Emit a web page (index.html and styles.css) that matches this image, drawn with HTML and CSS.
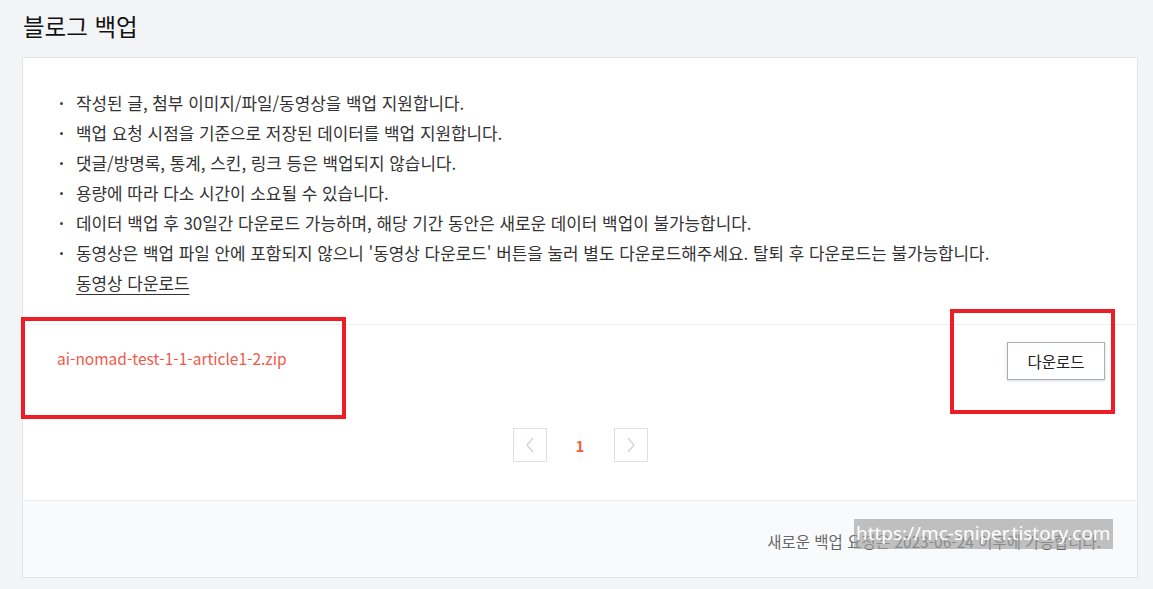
FILE: index.html
```html
<!DOCTYPE html>
<html lang="ko">
<head>
<meta charset="utf-8">
<link rel="stylesheet" href="styles.css">
</head>
<body>
<div class="page">
  <h1 class="title">블로그 백업</h1>
  <div class="card">
    <ul class="notice">
      <li>작성된 글, 첨부 이미지/파일/동영상을 백업 지원합니다.</li>
      <li>백업 요청 시점을 기준으로 저장된 데이터를 백업 지원합니다.</li>
      <li>댓글/방명록, 통계, 스킨, 링크 등은 백업되지 않습니다.</li>
      <li>용량에 따라 다소 시간이 소요될 수 있습니다.</li>
      <li>데이터 백업 후 30일간 다운로드 가능하며, 해당 기간 동안은 새로운 데이터 백업이 불가능합니다.</li>
      <li>동영상은 백업 파일 안에 포함되지 않으니 '동영상 다운로드' 버튼을 눌러 별도 다운로드해주세요. 탈퇴 후 다운로드는 불가능합니다.<br><a class="video-link" href="#">동영상 다운로드</a></li>
    </ul>
    <div class="file-row">
      <span class="file-name">ai-nomad-test-1-1-article1-2.zip</span>
      <button class="btn">다운로드</button>
    </div>
    <div class="pager">
      <span class="pg-btn"><svg width="10" height="16" viewBox="0 0 10 16"><path d="M8 1 L2 8 L8 15" fill="none" stroke="#d3d7de" stroke-width="1.5"/></svg></span>
      <span class="pg-num">1</span>
      <span class="pg-btn"><svg width="10" height="16" viewBox="0 0 10 16"><path d="M2 1 L8 8 L2 15" fill="none" stroke="#d3d7de" stroke-width="1.5"/></svg></span>
    </div>
    <div class="footer">
      <span class="footer-text">새로운 백업 요청은 2023-06-24 이후에 가능합니다.</span>
    </div>
  </div>
  <div class="mark mark-file"></div>
  <div class="mark mark-btn"></div>
  <div class="watermark">https://mc-sniper.tistory.com</div>
</div>
</body>
</html>
```

FILE: styles.css
```css
* { box-sizing: border-box; }
html, body {
  margin: 0;
  padding: 0;
  background: #f3f4f6;
  font-family: "Noto Sans CJK KR", "Noto Sans", sans-serif;
  color: #222;
}
.page {
  position: relative;
  width: 1153px;
  height: 589px;
  padding: 0 15px 0 22px;
}
.title {
  margin: 0;
  padding: 9px 0 0 1px;
  height: 57px;
  font-size: 23.5px;
  font-weight: 400;
  line-height: 34px;
  color: #111;
}
.card {
  background: #fff;
  border: 1px solid #e1e4e8;
  display: flex;
  flex-direction: column;
}
.notice {
  list-style: none;
  margin: 0;
  padding: 30px 0 26px 53px;
  font-size: 16.9px;
  line-height: 30px;
  color: #333;
}
.notice li {
  position: relative;
}
.notice li::before {
  content: "";
  position: absolute;
  left: -16px;
  top: 14px;
  width: 3px;
  height: 3px;
  background: #444;
  border-radius: 50%;
}
.video-link {
  color: #333;
  text-decoration: underline;
  text-underline-offset: 4px;
}
.file-row {
  border-top: 1px solid #eef0f3;
  display: flex;
  justify-content: space-between;
  align-items: center;
  padding: 15px 32px 0 34px;
  height: 55px;
}
.file-name {
  color: #f0584a;
  font-size: 15.5px;
  margin-top: -3px;
}
.btn {
  width: 98px;
  height: 38px;
  background: #fff;
  border: 1px solid #a8b0bf;
  box-shadow: 0 1px 3px rgba(0,0,0,0.15);
  font-family: inherit;
  font-size: 15.5px;
  color: #222;
  padding: 0;
  margin-top: 2px;
}
.pager {
  display: flex;
  justify-content: center;
  align-items: center;
  padding: 49px 0 38px 0;
}
.pg-btn {
  width: 34px;
  height: 34px;
  border: 1px solid #dde1e7;
  display: flex;
  align-items: center;
  justify-content: center;
}
.pg-num {
  width: 67px;
  text-align: center;
  color: #f3603f;
  font-size: 15px;
  font-weight: 700;
}
.footer {
  border-top: 1px solid #eceef1;
  background: #f9fafb;
  height: 77px;
  display: flex;
  align-items: center;
  justify-content: flex-end;
  padding: 4px 36px 0 0;
}
.footer-text {
  color: #666;
  font-size: 15.5px;
}
.mark {
  position: absolute;
  border: 4px solid #ee1c25;
}
.mark-file {
  left: 21px;
  top: 317px;
  width: 325px;
  height: 102px;
}
.mark-btn {
  left: 950px;
  top: 309px;
  width: 165px;
  height: 105px;
}
.watermark {
  position: absolute;
  left: 854px;
  top: 519px;
  width: 259px;
  height: 30px;
  background: rgba(160,160,160,0.65);
  color: #fff;
  font-family: "Noto Sans", sans-serif;
  font-size: 18.9px;
  line-height: 28px;
  padding-left: 2px;
  white-space: nowrap;
}
```
